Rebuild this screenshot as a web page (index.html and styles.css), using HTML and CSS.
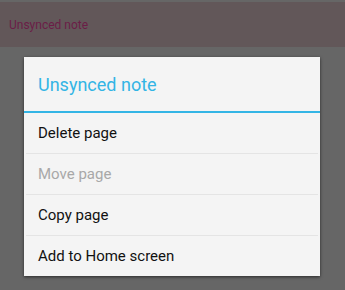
FILE: index.html
```html
<!DOCTYPE html>
<html lang="en">
<head>
  <meta charset="UTF-8">
  <meta name="viewport" content="width=device-width, initial-scale=1.0">
  <title>Unsynced note</title>
  <link rel="stylesheet" href="styles.css">
</head>
<body>

  <div class="screen">
    <div class="appbar">
      <span class="appbar-title">Unsynced note</span>
    </div>

    <div class="dialog">
      <div class="dialog-title">Unsynced note</div>
      <ul class="menu">
        <li class="menu-item">Delete page</li>
        <li class="menu-item disabled">Move page</li>
        <li class="menu-item">Copy page</li>
        <li class="menu-item">Add to Home screen</li>
      </ul>
    </div>
  </div>

</body>
</html>
```

FILE: styles.css
```css
body {
  margin: 0;
  font-family: Roboto, "Noto Sans", sans-serif;
  background: #666666;
}

.screen {
  width: 345px;
  height: 290px;
  padding-top: 2px;
  box-sizing: border-box;
  overflow: hidden;
}

/* Dimmed action bar behind the dialog */
.appbar {
  height: 45px;
  background: #625759;
  display: flex;
  align-items: center;
  padding-left: 9px;
}

.appbar-title {
  color: #6b1d47;
  font-size: 12px;
  margin-top: 1px;
}

.dialog {
  width: 296px;
  margin: 10px 0 0 24px;
  background: #f4f4f4;
  box-shadow: 0 1px 3px rgba(0, 0, 0, 0.6);
}

.dialog-title {
  height: 54px;
  display: flex;
  align-items: center;
  padding-left: 14px;
  color: #33b5e5;
  font-size: 18px;
  border-bottom: 2px solid #33b5e5;
}

.menu {
  list-style: none;
  margin: 0;
  padding: 0;
}

.menu-item {
  height: 40px;
  display: flex;
  align-items: center;
  margin: 0 2px;
  padding-left: 12px;
  font-size: 15px;
  color: #111;
  border-bottom: 1px solid #e4e4e4;
}

.menu-item:last-child {
  border-bottom: none;
}

.menu-item.disabled {
  color: #a8a8a8;
}
```
